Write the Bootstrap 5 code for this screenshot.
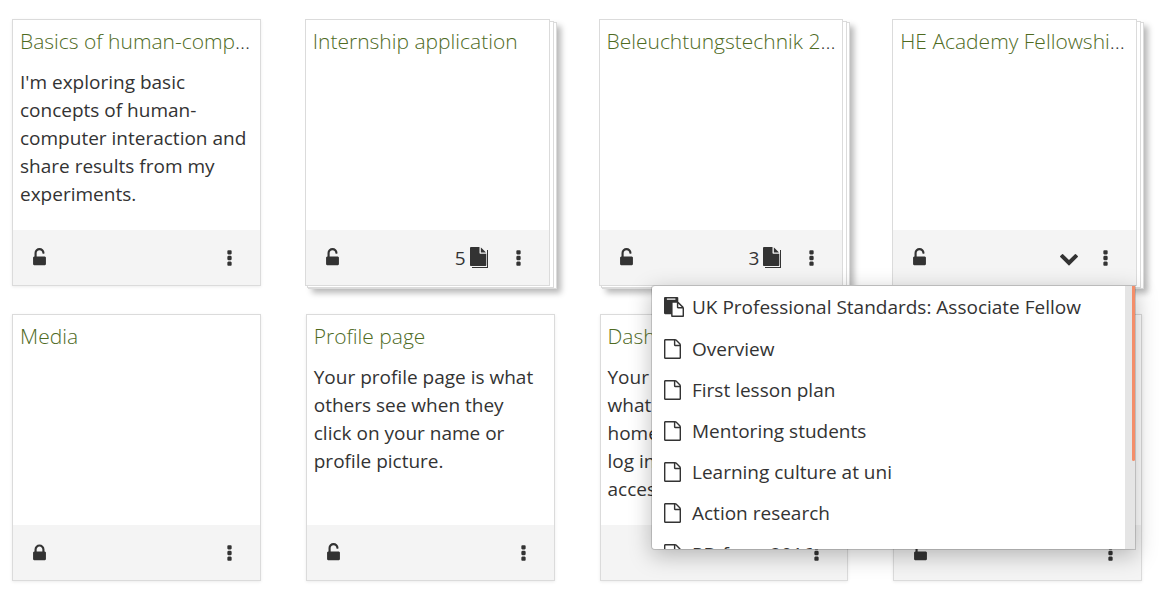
<!DOCTYPE html>
<html lang="en">
<head>
<meta charset="utf-8">
<meta name="viewport" content="width=device-width, initial-scale=1">
<title>Portfolios</title>
<link href="https://cdn.jsdelivr.net/npm/bootstrap@5.3.0/dist/css/bootstrap.min.css" rel="stylesheet">
<style>
  body { font-family: "Open Sans", "Noto Sans", sans-serif; font-size: 19px; line-height: 28px; color: #333; background: #fff; }
  .page-grid { display: grid; grid-template-columns: repeat(4, minmax(0, 1fr)); gap: 28px 45px; padding: 19px 18px 10px 12px; }
  .tile { min-height: 267px; border: 1px solid #dbdbdb; border-radius: 0; color: inherit; background: #fff; box-shadow: 0 1px 3px rgba(0,0,0,.08); }
  .tile .card-body { padding: 7px 4px 7px 7px; }
  .tile .card-body p { padding-right: 8px; }
  .tile-title { font-size: 21px; font-weight: 300; line-height: 28px; margin: 0 0 13px; }
  .tile-title a { color: #4f6b1f; text-decoration: none; }
  .tile .card-footer { min-height: 55px; padding: 0 28px 0 20px; border: 0; border-radius: 0; background: #f4f4f4; }
  .tile-btn { border: 0; padding: 0; background: none; color: inherit; display: flex; align-items: center; }
  svg { display: block; height: 20px; fill: currentColor; flex: none; }
  .pages-icon { height: 21px; }

  /* A collection looks like a pile of three sheets */
  .pile { position: relative; z-index: 0; margin: 0 5px 0 -1px; }
  .pile .tile { height: 100%; box-shadow: none; }
  .pile::before, .pile::after { content: ""; position: absolute; z-index: -1; background: #fff; border: 1px solid #dbdbdb; }
  .pile::before { inset: 2px -4px -2px 2px; }
  .pile::after { inset: 3px -7px -3px 3px; z-index: -2; box-shadow: 4px 4px 6px rgba(0,0,0,.28); }
  .pile-open { z-index: 5; }

  .page-menu { position: absolute; top: 100%; right: 1px; width: 485px; height: 265px; overflow: hidden; display: flex; background: #fff; border: 1px solid rgba(0,0,0,.15); border-top-color: #bbb; border-radius: 4px 0 0 4px; background-clip: padding-box; box-shadow: 0 6px 22px rgba(0,0,0,.25); margin-top: -1px; }
  .page-menu ul { flex: 1; }
  .page-menu a { display: flex; align-items: center; height: 41px; padding-left: 12px; color: inherit; text-decoration: none; white-space: nowrap; }
  .page-menu li:first-child { margin-bottom: 1px; }
  .page-menu svg { width: 20px; margin-right: 8px; }
  .page-menu .narrow { width: 17px; margin-right: 11px; }
  .scroll-track { width: 10px; background: #e5e5e5; }
  .scroll-thumb { width: 3px; height: 175px; margin-left: auto; background: #f48e6a; border-radius: 0 0 2px 2px; }
</style>
</head>
<body>
<svg class="d-none" aria-hidden="true">
  <symbol id="i-unlock" viewBox="0 0 1152 1792"><path d="M1056 768q40 0 68 28t28 68v576q0 40-28 68t-68 28h-960q-40 0-68-28t-28-68v-576q0-40 28-68t68-28h32v-320q0-185 131.500-316.500t316.500-131.500 316.500 131.500 131.500 316.500q0 26-19 45t-45 19h-64q-26 0-45-19t-19-45q0-106-75-181t-181-75-181 75-75 181v320h736z"/></symbol>
  <symbol id="i-lock" viewBox="0 0 1152 1792"><path d="M320 768h512v-192q0-106-75-181t-181-75-181 75-75 181v192zm832 96v576q0 40-28 68t-68 28h-960q-40 0-68-28t-28-68v-576q0-40 28-68t68-28h32v-192q0-184 132-316t316-132 316 132 132 316v192h32q40 0 68 28t28 68z"/></symbol>
  <symbol id="i-more" viewBox="0 0 384 1792"><path d="M384 1312v192q0 40-28 68t-68 28h-192q-40 0-68-28t-28-68v-192q0-40 28-68t68-28h192q40 0 68 28t28 68zm0-512v192q0 40-28 68t-68 28h-192q-40 0-68-28t-28-68v-192q0-40 28-68t68-28h192q40 0 68 28t28 68zm0-512v192q0 40-28 68t-68 28h-192q-40 0-68-28t-28-68v-192q0-40 28-68t68-28h192q40 0 68 28t28 68z"/></symbol>
  <symbol id="i-file" viewBox="0 0 1536 1792"><path d="M1468 380q28 28 48 76t20 88v1152q0 40-28 68t-68 28h-1344q-40 0-68-28t-28-68v-1600q0-40 28-68t68-28h896q40 0 88 20t76 48zm-444-244v376h376q-10-29-22-41l-313-313q-12-12-41-22zm384 1528v-1024h-416q-40 0-68-28t-28-68v-416h-768v1536h1280z"/></symbol>
  <symbol id="i-files" viewBox="0 0 18 21"><path d="M17 3h1v18H2v-1h15z"/><path transform="scale(.0106)" d="M1024 512v-472q22 14 36 28l408 408q14 14 28 36h-472zm-128 32q0 40 28 68t68 28h544v1056q0 40-28 68t-68 28h-1344q-40 0-68-28t-28-68v-1600q0-40 28-68t68-28h800v544z"/></symbol>
  <symbol id="i-paste" viewBox="0 0 1792 1792"><path d="M768 1664h896v-640h-416q-40 0-68-28t-28-68v-416h-384v1152zm256-1440v-64q0-13-9.500-22.500t-22.500-9.500h-704q-13 0-22.500 9.500t-9.500 22.500v64q0 13 9.500 22.500t22.500 9.500h704q13 0 22.500-9.500t9.500-22.500zm256 672h299l-299-299v299zm512 128v672q0 40-28 68t-68 28h-960q-40 0-68-28t-28-68v-160h-544q-40 0-68-28t-28-68v-1344q0-40 28-68t68-28h1088q40 0 68 28t28 68v328q21 13 36 28l408 408q28 28 48 76t20 88z"/></symbol>
  <symbol id="i-down" viewBox="0 0 1792 1792"><path d="M1683 808l-742 741q-19 19-45 19t-45-19l-742-741q-19-19-19-45.500t19-45.500l166-165q19-19 45-19t45 19l531 531 531-531q19-19 45-19t45 19l166 165q19 19 19 45.500t-19 45.500z"/></symbol>
</svg>

<main class="page-grid">
  <article class="card tile">
    <div class="card-body">
      <h3 class="tile-title text-truncate"><a href="#">Basics of human-computer interaction</a></h3>
      <p class="mb-0">I'm exploring basic concepts of human-computer interaction and share results from my experiments.</p>
    </div>
    <div class="card-footer d-flex align-items-center">
      <button class="tile-btn" aria-label="Manage access"><svg width="13"><use href="#i-unlock"/></svg></button>
      <button class="tile-btn ms-auto" aria-label="More options"><svg width="5"><use href="#i-more"/></svg></button>
    </div>
  </article>

  <div class="pile">
    <article class="card tile">
      <div class="card-body"><h3 class="tile-title text-truncate"><a href="#">Internship application</a></h3></div>
      <div class="card-footer d-flex align-items-center">
        <button class="tile-btn" aria-label="Manage access"><svg width="13"><use href="#i-unlock"/></svg></button>
        <button class="tile-btn ms-auto me-4" aria-label="5 pages"><span class="me-1">5</span><svg class="pages-icon" width="18"><use href="#i-files"/></svg></button>
        <button class="tile-btn ms-1" aria-label="More options"><svg width="5"><use href="#i-more"/></svg></button>
      </div>
    </article>
  </div>

  <div class="pile">
    <article class="card tile">
      <div class="card-body"><h3 class="tile-title text-truncate"><a href="#">Beleuchtungstechnik 2016</a></h3></div>
      <div class="card-footer d-flex align-items-center">
        <button class="tile-btn" aria-label="Manage access"><svg width="13"><use href="#i-unlock"/></svg></button>
        <button class="tile-btn ms-auto me-4" aria-label="3 pages"><span class="me-1">3</span><svg class="pages-icon" width="18"><use href="#i-files"/></svg></button>
        <button class="tile-btn ms-1" aria-label="More options"><svg width="5"><use href="#i-more"/></svg></button>
      </div>
    </article>
  </div>

  <div class="pile pile-open">
    <article class="card tile">
      <div class="card-body"><h3 class="tile-title text-truncate"><a href="#">HE Academy Fellowship application</a></h3></div>
      <div class="card-footer d-flex align-items-center">
        <button class="tile-btn" aria-label="Manage access"><svg width="13"><use href="#i-unlock"/></svg></button>
        <button class="tile-btn ms-auto me-4" aria-label="Close page list" aria-expanded="true"><svg width="20"><use href="#i-down"/></svg></button>
        <button class="tile-btn" aria-label="More options"><svg width="5"><use href="#i-more"/></svg></button>
      </div>
    </article>
    <div class="page-menu">
      <ul class="list-unstyled mb-0">
        <li><a href="#"><svg><use href="#i-paste"/></svg>UK Professional Standards: Associate Fellow</a></li>
        <li><a href="#"><svg class="narrow"><use href="#i-file"/></svg>Overview</a></li>
        <li><a href="#"><svg class="narrow"><use href="#i-file"/></svg>First lesson plan</a></li>
        <li><a href="#"><svg class="narrow"><use href="#i-file"/></svg>Mentoring students</a></li>
        <li><a href="#"><svg class="narrow"><use href="#i-file"/></svg>Learning culture at uni</a></li>
        <li><a href="#"><svg class="narrow"><use href="#i-file"/></svg>Action research</a></li>
        <li><a href="#"><svg class="narrow"><use href="#i-file"/></svg>PD from 2016</a></li>
      </ul>
      <div class="scroll-track"><div class="scroll-thumb"></div></div>
    </div>
  </div>

  <article class="card tile">
    <div class="card-body"><h3 class="tile-title text-truncate"><a href="#">Media</a></h3></div>
    <div class="card-footer d-flex align-items-center">
      <button class="tile-btn" aria-label="Manage access"><svg width="13"><use href="#i-lock"/></svg></button>
      <button class="tile-btn ms-auto" aria-label="More options"><svg width="5"><use href="#i-more"/></svg></button>
    </div>
  </article>

  <article class="card tile">
    <div class="card-body">
      <h3 class="tile-title text-truncate"><a href="#">Profile page</a></h3>
      <p class="mb-0">Your profile page is what others see when they click on your name or profile picture.</p>
    </div>
    <div class="card-footer d-flex align-items-center">
      <button class="tile-btn" aria-label="Manage access"><svg width="13"><use href="#i-unlock"/></svg></button>
      <button class="tile-btn ms-auto" aria-label="More options"><svg width="5"><use href="#i-more"/></svg></button>
    </div>
  </article>

  <article class="card tile">
    <div class="card-body">
      <h3 class="tile-title text-truncate"><a href="#">Dashboard page</a></h3>
      <p class="mb-0">Your dashboard page is what you see on the homepage when you first log in. Only you have access to it.</p>
    </div>
    <div class="card-footer d-flex align-items-center">
      <button class="tile-btn ms-auto" aria-label="More options"><svg width="5"><use href="#i-more"/></svg></button>
    </div>
  </article>

  <article class="card tile">
    <div class="card-body"></div>
    <div class="card-footer d-flex align-items-center">
      <button class="tile-btn" aria-label="Manage access"><svg width="13"><use href="#i-unlock"/></svg></button>
      <button class="tile-btn ms-auto" aria-label="More options"><svg width="5"><use href="#i-more"/></svg></button>
    </div>
  </article>
</main>
<script src="https://cdn.jsdelivr.net/npm/bootstrap@5.3.0/dist/js/bootstrap.bundle.min.js"></script>
</body>
</html>
